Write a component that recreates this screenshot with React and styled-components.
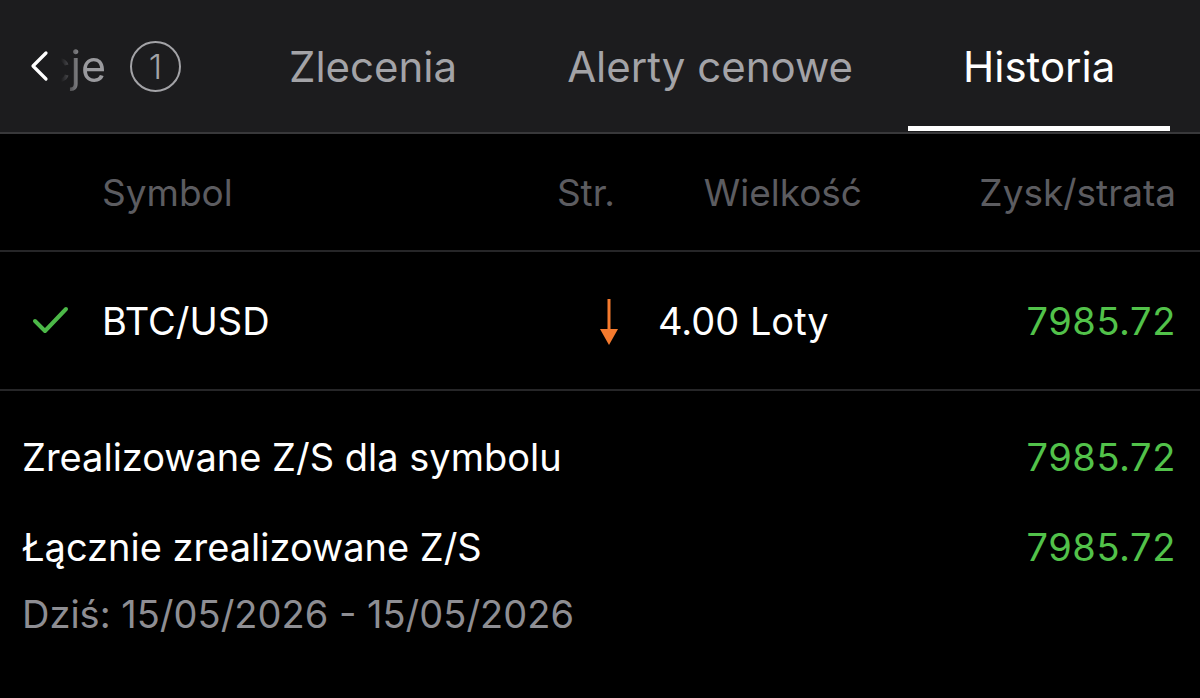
import React from 'react'
import styled, { createGlobalStyle } from 'styled-components'

const GlobalStyle = createGlobalStyle`
  html, body {
    margin: 0;
    padding: 0;
    background: #000;
    font-family: Inter, "Noto Sans", sans-serif;
    -webkit-font-smoothing: antialiased;
  }
`

const Page = styled.div`
  width: 1200px;
  height: 698px;
  background: #000;
  overflow: hidden;
`

const TopBar = styled.header`
  display: flex;
  align-items: stretch;
  height: 132px;
  background: #1c1c1e;
  border-bottom: 2px solid #38383a;
`

const BackGroup = styled.div`
  display: flex;
  align-items: center;
  width: 234px;
  padding-left: 28px;
  box-sizing: border-box;
`

const Faded = styled.span`
  font-size: 43px;
  color: #9a9a9e;
  margin-left: -4px;
  -webkit-mask-image: linear-gradient(to right, transparent 0%, transparent 25%, #000 60%);
  mask-image: linear-gradient(to right, transparent 0%, transparent 25%, #000 60%);
`

const Badge = styled.span`
  display: inline-flex;
  align-items: center;
  justify-content: center;
  width: 47px;
  height: 47px;
  margin-left: 24px;
  border: 2.5px solid #a3a3a7;
  border-radius: 50%;
  color: #a3a3a7;
  font-size: 34px;
  font-weight: 300;
`

const Tab = styled.div`
  position: relative;
  display: flex;
  align-items: center;
  padding: 0 55px;
  font-size: 42px;
  color: ${p => (p.$active ? '#ffffff' : '#a3a3a7')};

  &::after {
    content: '';
    display: ${p => (p.$active ? 'block' : 'none')};
    position: absolute;
    left: 0;
    right: 0;
    bottom: 1px;
    height: 5px;
    background: #fff;
  }
`

const Grid = styled.div`
  display: grid;
  grid-template-columns: 102px 418px 120px 240px 1fr;
  align-items: center;
  padding-right: 24px;
  height: ${p => p.$h}px;
  border-bottom: 2px solid #262628;
`

const HeadCell = styled.div`
  font-size: 37px;
  color: #5c5c60;
  text-align: ${p => p.$align || 'left'};
  padding-right: ${p => p.$pr || 0}px;
`

const IconCell = styled.div`
  display: flex;
  align-items: center;
  padding-left: 32px;
`

const Cell = styled.div`
  font-size: 38px;
  color: ${p => p.$color || '#ffffff'};
  text-align: ${p => p.$align || 'left'};
  padding-left: ${p => p.$pl || 0}px;
  padding-right: ${p => p.$pr || 0}px;
  letter-spacing: ${p => (p.$num ? '0.6px' : '0')};
`

const ArrowCell = styled.div`
  display: flex;
  justify-content: flex-end;
  padding-right: 21px;
  padding-top: 2px;
`

const Summary = styled.section`
  display: flex;
  flex-direction: column;
  padding: 42px 24px 0 22px;
`

const SumRow = styled.div`
  display: flex;
  justify-content: space-between;
  align-items: center;
  height: 48px;
  margin-bottom: ${p => p.$mb || 0}px;
  font-size: 38px;
  color: #ffffff;
`

const Value = styled.span`
  color: #52c24a;
  letter-spacing: 0.6px;
`

const DateLine = styled.div`
  font-size: 38px;
  color: #8e8e93;
  margin-top: 20px;
`

const Chevron = () => (
  <svg width="22" height="32" viewBox="0 0 22 32" fill="none">
    <path d="M18 3 L5 16 L18 29" stroke="#fff" strokeWidth="3.2" strokeLinecap="round" strokeLinejoin="round" />
  </svg>
)

const Check = () => (
  <svg width="38" height="30" viewBox="0 0 38 30" fill="none">
    <path d="M3 15 L13 25 L34 3" stroke="#4cb848" strokeWidth="4" strokeLinecap="round" strokeLinejoin="round" />
  </svg>
)

const DownArrow = () => (
  <svg width="20" height="48" viewBox="0 0 20 48" fill="none">
    <line x1="10" y1="1" x2="10" y2="34" stroke="#f47a2e" strokeWidth="3" />
    <path d="M1 31 L19 31 L10 47 Z" fill="#f47a2e" />
  </svg>
)

export default function App() {
  return (
    <Page>
      <GlobalStyle />
      <TopBar>
        <BackGroup>
          <Chevron />
          <Faded>cje</Faded>
          <Badge>1</Badge>
        </BackGroup>
        <Tab>Zlecenia</Tab>
        <Tab>Alerty cenowe</Tab>
        <Tab $active>Historia</Tab>
      </TopBar>

      <Grid $h={116}>
        <div />
        <HeadCell>Symbol</HeadCell>
        <HeadCell $align="right" $pr={25}>Str.</HeadCell>
        <HeadCell $align="right" $pr={18}>Wielkość</HeadCell>
        <HeadCell $align="right">Zysk/strata</HeadCell>
      </Grid>

      <Grid $h={137}>
        <IconCell>
          <Check />
        </IconCell>
        <Cell>BTC/USD</Cell>
        <ArrowCell>
          <DownArrow />
        </ArrowCell>
        <Cell $pl={18}>4.00 Loty</Cell>
        <Cell $align="right" $color="#52c24a" $num>7985.72</Cell>
      </Grid>

      <Summary>
        <SumRow $mb={42}>
          <span>Zrealizowane Z/S dla symbolu</span>
          <Value>7985.72</Value>
        </SumRow>
        <SumRow>
          <span>Łącznie zrealizowane Z/S</span>
          <Value>7985.72</Value>
        </SumRow>
        <DateLine>Dziś: 15/05/2026 - 15/05/2026</DateLine>
      </Summary>
    </Page>
  )
}
